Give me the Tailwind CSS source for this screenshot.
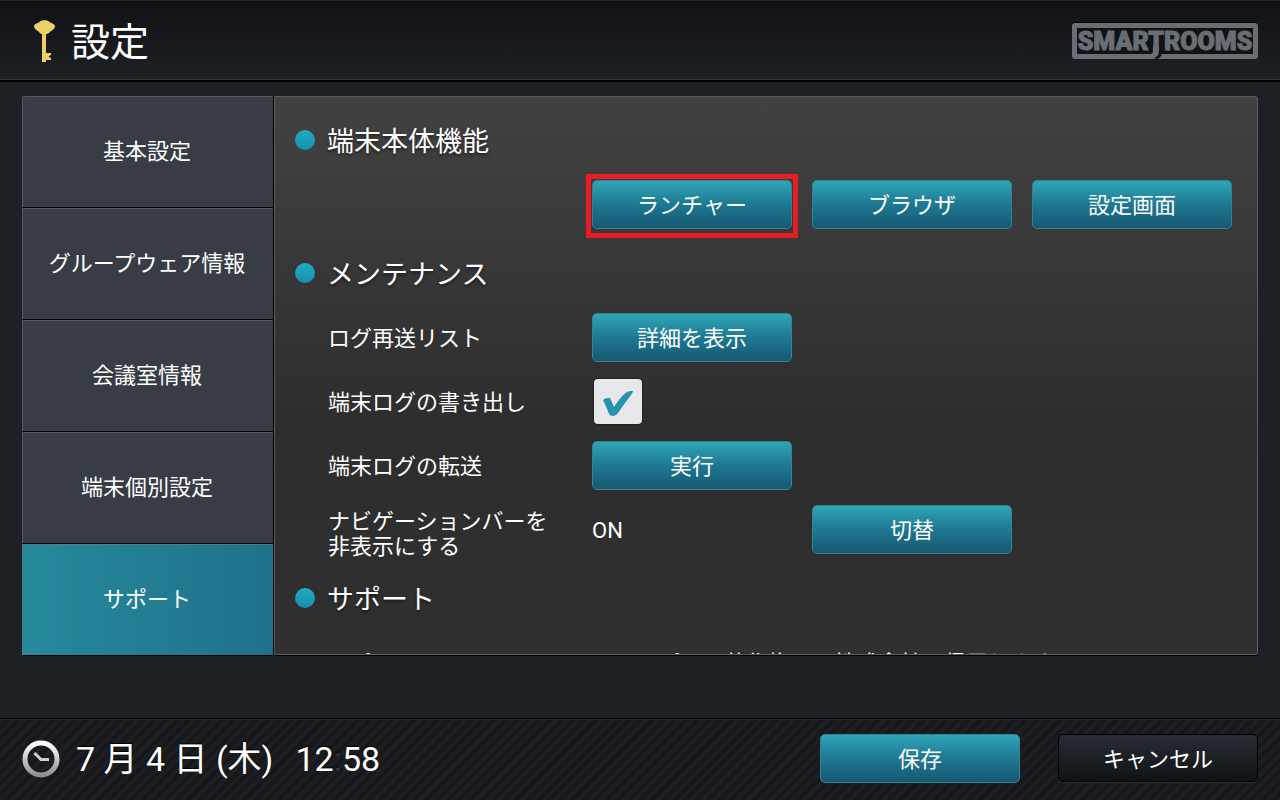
<!DOCTYPE html>
<html lang="ja">
<head>
    <meta charset="UTF-8">
    <meta name="viewport" content="width=device-width, initial-scale=1.0">
    <title>設定</title>
    <script src="https://cdn.jsdelivr.net/npm/@tailwindcss/browser@4"></script>
</head>
<body class="flex h-screen flex-col bg-[#1d2024] font-[Roboto,'Noto_Sans_CJK_JP',sans-serif] text-[22px] leading-[25px] text-white">
    <header class="flex h-[82px] shrink-0 items-center justify-between border-t border-b-2 border-t-[#25282b] border-b-black bg-linear-to-b from-[#101113] to-[#1e2126] pr-[22px] pl-8 shadow-[inset_0_-1px_0_#34373b]">
        <div class="flex items-center gap-[14px]">
            <svg class="h-[44px] w-[25px]" viewBox="0 0 25 44" fill="#efcf68" aria-hidden="true">
                <path d="M2 7C3 4 7 4 8 2.500C10 .8 15 .8 17 2.500C18 4 22 4 23 7C23 10 20 11 18 13C16 15 15 15 14 15V34L19 34V36L17 37L17 38L19 39V41H14V43H10V15C9 15 8 14.500 7 13C5 11 2 10 2 7Z"/>
            </svg>
            <h1 class="pt-1 text-[39px] leading-[44px]">設定</h1>
        </div>
        <div class="relative flex h-9 w-[186px] items-center justify-center rounded-[3px] border-[5px] border-[#6a6d73] bg-[#101315] pt-0.5 text-[25px] font-black text-[#6a6d73] shadow-[0_-1px_0_#000] [-webkit-text-stroke:1px_#6a6d73]">
            <span>SMART</span><span>ROOMS</span>
            <svg class="absolute top-[18px] left-[71px] h-[13px] w-[24px]" viewBox="0 0 24 13" aria-hidden="true">
                <path d="M6 12L16 4V8H14Q12 13 8 13Z" fill="#101315"/>
                <path d="M5 0H11V4Q11 11 5 12H1V8H2Q5 8 5 5Z" fill="#6a6d73"/>
            </svg>
        </div>
    </header>

    <main class="grid min-h-0 flex-1 grid-cols-[252px_1fr] px-[22px] pt-[14px] pb-[62px]">
        <nav class="grid min-h-0 grid-rows-5 border-r border-black text-shadow-[0_2px_2px_rgb(0_0_0/0.4)]">
            <button class="rounded-tl-[3px] border-t border-b border-l border-[#555a62] border-b-black bg-[#373c45] pr-0.5 pb-0.5">基本設定</button>
            <button class="border-t border-b border-l border-[#555a62] border-b-black bg-[#373c45] pr-0.5 pb-0.5">グループウェア情報</button>
            <button class="border-t border-b border-l border-[#555a62] border-b-black bg-[#373c45] pr-0.5 pb-0.5">会議室情報</button>
            <button class="border-t border-b border-l border-[#555a62] border-b-black bg-[#373c45] pr-0.5 pb-0.5">端末個別設定</button>
            <button class="border-t border-b border-l border-[#4c7f86] border-b-black bg-linear-to-r from-[#268a9b] to-[#1f718a] pr-0.5 pb-0.5" aria-current="page">サポート</button>
        </nav>

        <div class="min-h-0 border-b border-black">
            <div class="h-full overflow-y-auto rounded-r-[3px] border border-[#5c5d5d] bg-linear-to-b from-[#424242] via-[#2d2d2d] via-60% to-[#303030] pt-1.5 pl-5 [scrollbar-width:none]">
                <section>
                    <h2 class="flex h-[69px] items-center gap-3 pt-1 font-['Noto_Sans_CJK_JP',sans-serif] text-[27px] text-shadow-[0_2px_3px_rgb(0_0_0/0.5)]">
                        <span class="size-5 rounded-full bg-linear-to-b from-[#22abc3] to-[#1690b0]"></span>端末本体機能
                    </h2>
                    <div class="grid h-16 grid-cols-[244px_200px_200px_200px] items-center gap-x-5 pt-px pl-[33px]">
                        <div class="relative col-start-2">
                            <button class="block h-[49px] w-full rounded-[5px] border border-[#358392] bg-linear-to-b from-[#2fa6b8] via-[#1e7891] to-[#175873] pt-0.5">ランチャー</button>
                            <div class="pointer-events-none absolute -inset-x-1.5 -top-1.5 -bottom-[9px] border-5 border-[#e91c23]"></div>
                        </div>
                        <button class="h-[49px] rounded-[5px] border border-[#358392] bg-linear-to-b from-[#2fa6b8] via-[#1e7891] to-[#175873] pt-0.5">ブラウザ</button>
                        <button class="h-[49px] rounded-[5px] border border-[#358392] bg-linear-to-b from-[#2fa6b8] via-[#1e7891] to-[#175873] pt-0.5">設定画面</button>
                    </div>
                </section>

                <section>
                    <h2 class="flex h-[69px] items-center gap-3 pt-1 font-['Noto_Sans_CJK_JP',sans-serif] text-[27px] text-shadow-[0_2px_3px_rgb(0_0_0/0.5)]">
                        <span class="size-5 rounded-full bg-linear-to-b from-[#22abc3] to-[#1690b0]"></span>メンテナンス
                    </h2>
                    <div class="grid h-16 grid-cols-[244px_200px_200px_200px] items-center gap-x-5 pt-px pl-[33px]">
                        <span class="pt-0.5">ログ再送リスト</span>
                        <button class="h-[49px] rounded-[5px] border border-[#358392] bg-linear-to-b from-[#2fa6b8] via-[#1e7891] to-[#175873] pt-0.5">詳細を表示</button>
                    </div>
                    <div class="grid h-16 grid-cols-[244px_200px_200px_200px] items-center gap-x-5 pt-px pl-[33px]">
                        <label for="log-export" class="pt-0.5">端末ログの書き出し</label>
                        <div class="relative ml-0.5 h-[45px] w-12">
                            <input id="log-export" type="checkbox" checked class="peer block h-full w-full appearance-none rounded-[4px] bg-[#e6e8ea] shadow-[0_0_2px_#000]">
                            <svg class="pointer-events-none absolute inset-0 hidden h-[45px] w-12 peer-checked:block" viewBox="0 0 48 45" fill="#2592ae" aria-hidden="true">
                                <path d="M9 21Q11 18.500 16 19L20 28Q27 17 33 13Q36 11.500 39 12Q39 13 37 16Q30 25 24 34Q22 37 19 37Q16 37 15 35Q13 29 9 21Z"/>
                            </svg>
                        </div>
                    </div>
                    <div class="grid h-16 grid-cols-[244px_200px_200px_200px] items-center gap-x-5 pt-px pl-[33px]">
                        <span class="pt-0.5">端末ログの転送</span>
                        <button class="h-[49px] rounded-[5px] border border-[#358392] bg-linear-to-b from-[#2fa6b8] via-[#1e7891] to-[#175873] pt-0.5">実行</button>
                    </div>
                    <div class="grid h-16 grid-cols-[244px_200px_200px_200px] items-center gap-x-5 pt-px pl-[33px]">
                        <span class="pt-2">ナビゲーションバーを<br>非表示にする</span>
                        <span class="pt-0.5">ON</span>
                        <button class="h-[49px] rounded-[5px] border border-[#358392] bg-linear-to-b from-[#2fa6b8] via-[#1e7891] to-[#175873] pt-0.5">切替</button>
                    </div>
                </section>

                <section>
                    <h2 class="flex h-[69px] items-center gap-3 pt-1 font-['Noto_Sans_CJK_JP',sans-serif] text-[27px] text-shadow-[0_2px_3px_rgb(0_0_0/0.5)]">
                        <span class="size-5 rounded-full bg-linear-to-b from-[#22abc3] to-[#1690b0]"></span>サポート
                    </h2>
                    <div class="grid h-16 grid-cols-[244px_640px] items-center gap-x-5 pt-0.5 pl-[33px]">
                        <span>コピーライト</span>
                        <span>このアプリの著作権は、株式会社に帰属します。</span>
                    </div>
                </section>
            </div>
        </div>
    </main>

    <footer class="flex h-[82px] shrink-0 items-center justify-between border-t border-black bg-[repeating-linear-gradient(135deg,#1c1e22_0_4px,#16181b_4px_8px)] px-[22px] pb-0.5 shadow-[inset_0_1px_0_#292c2f]">
        <div class="flex items-center gap-4 text-[34px] leading-[40px] text-shadow-[0_-1px_1px_#000]">
            <svg class="size-[38px]" viewBox="0 0 38 38" fill="none" aria-hidden="true">
                <defs>
                    <linearGradient id="rim" x1="0" y1="0" x2="0" y2="1">
                        <stop offset="0" stop-color="#fff"/>
                        <stop offset="1" stop-color="#909090"/>
                    </linearGradient>
                </defs>
                <circle cx="19" cy="19" r="16" stroke="url(#rim)" stroke-width="5"/>
                <path d="M12.500 13L19 19.500H27" stroke="#d0d0d0" stroke-width="3"/>
            </svg>
            <p class="flex gap-[22px]">
                <span>7 月 4 日 (木)</span>
                <time>12<span class="text-[#33363a]">:</span>58</time>
            </p>
        </div>
        <div class="flex gap-[38px]">
            <button class="h-[49px] w-[200px] rounded-[5px] border border-[#358392] bg-linear-to-b from-[#2fa6b8] via-[#1e7891] to-[#175873] pt-0.5">保存</button>
            <button class="h-12 w-[200px] rounded-[5px] border border-black bg-linear-to-b from-[#282d34] to-[#101316] pt-0.5 shadow-[0_1px_0_#2b2e32]">キャンセル</button>
        </div>
    </footer>
</body>
</html>
